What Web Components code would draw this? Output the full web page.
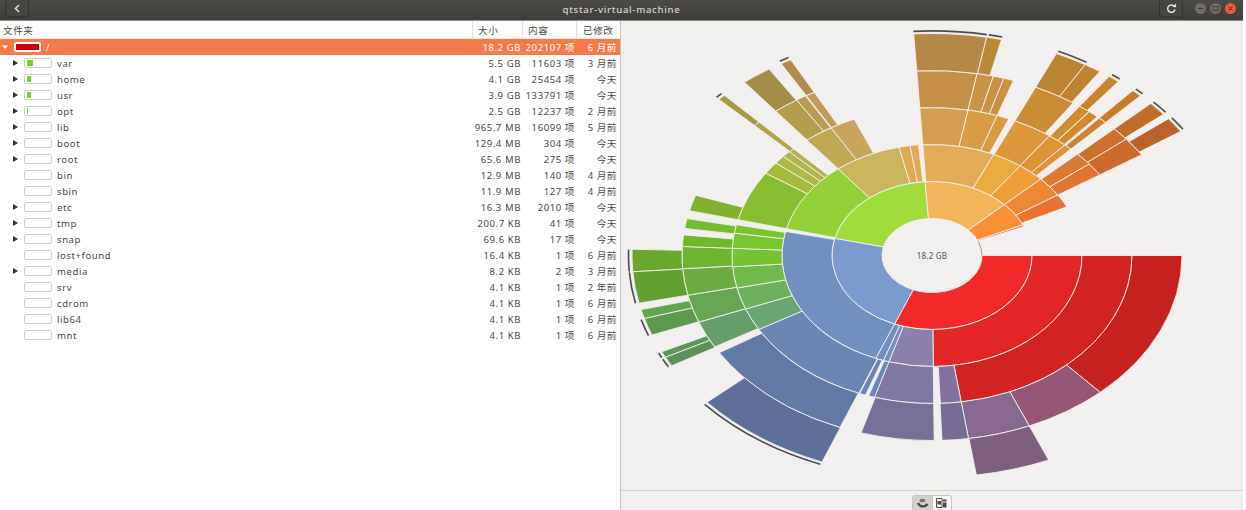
<!DOCTYPE html>
<html lang="zh-CN">
<head>
<meta charset="UTF-8">
<title>磁盘使用情况分析器</title>
<style>
  html, body { margin: 0; background: #fff; }
  body { font-family: "Noto Sans", "Noto Sans CJK SC", sans-serif; }
</style>
</head>
<body>
<app-window>
  <title-bar slot="top" heading="qtstar-virtual-machine"></title-bar>
  <folder-tree slot="left">
    <tree-row root open name="/" size="18.2 GB" count="202107 项" age="6 月前" fill="25"></tree-row>
    <tree-row arrow name="var" size="5.5 GB" count="11603 项" age="3 月前" fill="5.5"></tree-row>
    <tree-row arrow name="home" size="4.1 GB" count="25454 项" age="今天" fill="4"></tree-row>
    <tree-row arrow name="usr" size="3.9 GB" count="133791 项" age="今天" fill="3.5"></tree-row>
    <tree-row arrow name="opt" size="2.5 GB" count="12237 项" age="2 月前" fill="1.3"></tree-row>
    <tree-row arrow name="lib" size="965.7 MB" count="16099 项" age="5 月前"></tree-row>
    <tree-row arrow name="boot" size="129.4 MB" count="304 项" age="今天"></tree-row>
    <tree-row arrow name="root" size="65.6 MB" count="275 项" age="今天"></tree-row>
    <tree-row name="bin" size="12.9 MB" count="140 项" age="4 月前"></tree-row>
    <tree-row name="sbin" size="11.9 MB" count="127 项" age="4 月前"></tree-row>
    <tree-row arrow name="etc" size="16.3 MB" count="2010 项" age="今天"></tree-row>
    <tree-row arrow name="tmp" size="200.7 KB" count="41 项" age="今天"></tree-row>
    <tree-row arrow name="snap" size="69.6 KB" count="17 项" age="今天"></tree-row>
    <tree-row name="lost+found" size="16.4 KB" count="1 项" age="6 月前"></tree-row>
    <tree-row arrow name="media" size="8.2 KB" count="2 项" age="3 月前"></tree-row>
    <tree-row name="srv" size="4.1 KB" count="1 项" age="2 年前"></tree-row>
    <tree-row name="cdrom" size="4.1 KB" count="1 项" age="6 月前"></tree-row>
    <tree-row name="lib64" size="4.1 KB" count="1 项" age="6 月前"></tree-row>
    <tree-row name="mnt" size="4.1 KB" count="1 项" age="6 月前"></tree-row>
  </folder-tree>
  <chart-pane slot="right">
    <sun-burst total="18.2 GB"></sun-burst>
    <view-switch slot="foot"></view-switch>
  </chart-pane>
</app-window>

<script>
  // Outer frame: title bar on top, tree and chart side by side
  class AppWindow extends HTMLElement {
    constructor() {
      super();
      this.attachShadow({ mode: 'open' }).innerHTML = `
        <style>
          :host { display: flex; flex-direction: column; width: 1243px; height: 510px; background: #fff; }
          .body { display: flex; flex: 1; min-height: 0; }
          .left { display: block; width: 620px; background: #fff; border-right: 1px solid #c4c1bd; }
          .right { display: block; flex: 1; min-width: 0; }
        </style>
        <slot name="top"></slot>
        <div class="body">
          <div class="left"><slot name="left"></slot></div>
          <div class="right"><slot name="right"></slot></div>
        </div>`;
    }
  }

  class TitleBar extends HTMLElement {
    constructor() {
      super();
      this.attachShadow({ mode: 'open' }).innerHTML = `
        <style>
          :host {
            display: grid; grid-template-columns: 1fr auto 1fr; align-items: center;
            height: 21px; padding-bottom: 1px; box-sizing: border-box;
            background: linear-gradient(#4d4b45, #3e3d38); border-bottom: 1px solid #8b8985;
            color: #d8d5cd; font: 500 9.6px "Noto Sans", sans-serif; letter-spacing: .7px;
          }
          .side { display: flex; align-items: flex-start; height: 100%; }
          .end { justify-content: flex-end; }
          .btn {
            display: flex; align-items: center; justify-content: center;
            width: 24px; height: 17px; box-sizing: border-box; margin-left: 5px;
            border: 1px solid #35342f; border-top: 0; border-radius: 0 0 3px 3px; background: #47453f;
          }
          .ctl { display: flex; gap: 4px; margin: 3px 7px 0 12px; }
          .dot { width: 11px; height: 11px; border-radius: 50%; background: #6f6d66; display: flex; align-items: center; justify-content: center; }
          .dot.close { background: #e9602f; }
          svg { display: block; }
        </style>
        <div class="side">
          <div class="btn">
            <svg width="8" height="9" viewBox="0 0 8 9"><path d="M6 1L2.500 4.500L6 8" fill="none" stroke="#dcdad5" stroke-width="1.600"/></svg>
          </div>
        </div>
        <div class="title"></div>
        <div class="side end">
          <div class="btn">
            <svg width="11" height="11" viewBox="0 0 11 11">
              <path d="M8.200 3.200A3.700 3.700 0 1 0 9 6.500" fill="none" stroke="#e6e4df" stroke-width="1.500"/>
              <path d="M6.200 3.900L10.200 4.200L10 .6z" fill="#e6e4df"/>
            </svg>
          </div>
          <div class="ctl">
            <div class="dot"><svg width="7" height="7" viewBox="0 0 7 7"><path d="M1 3.500h5" stroke="#3f3e39" stroke-width="1"/></svg></div>
            <div class="dot"><svg width="7" height="7" viewBox="0 0 7 7"><rect x="1" y="1.500" width="5" height="4" fill="none" stroke="#3f3e39" stroke-width=".8"/></svg></div>
            <div class="dot close"><svg width="7" height="7" viewBox="0 0 7 7"><path d="M1.500 1.500l4 4M5.500 1.500l-4 4" stroke="#4a2516" stroke-width="1"/></svg></div>
          </div>
        </div>`;
      this.shadowRoot.querySelector('.title').textContent = this.getAttribute('heading');
    }
  }

  // Tree column headers plus the slotted rows
  class FolderTree extends HTMLElement {
    constructor() {
      super();
      this.attachShadow({ mode: 'open' }).innerHTML = `
        <style>
          :host { display: block; font: 9.6px "Noto Sans", "Noto Sans CJK SC", sans-serif; letter-spacing: .55px; color: #4a4a4a; }
          .head {
            display: grid; grid-template-columns: 473px 50px 54px 43px; height: 18px;
            background: linear-gradient(#fff, #fbfbfa); border-bottom: 1px solid #e9e7e4; box-sizing: border-box;
          }
          .head div { display: flex; align-items: center; padding-left: 5px; border-right: 1px solid #e3e1de; box-sizing: border-box; }
          .head div:first-child { padding-left: 3px; }
          .head div:last-child { border-right: 0; padding-left: 6px; }
        </style>
        <div class="head"><div>文件夹</div><div>大小</div><div>内容</div><div>已修改</div></div>
        <slot></slot>`;
    }
  }

  // One line of the tree: expander, usage bar, name and three data columns
  class TreeRow extends HTMLElement {
    constructor() {
      super();
      this.attachShadow({ mode: 'open' }).innerHTML = `
        <style>
          :host { display: grid; grid-template-columns: 473px 48px 54px 42px; height: 16px; align-items: center; color: #4a4a4a; padding-right: 3px; }
          :host([root]) { background: #f47b4b; color: #fff; }
          .name { display: flex; align-items: center; padding-left: 13px; }
          :host([root]) .name { padding-left: 2px; }
          .arrow { width: 5px; height: 6px; margin-right: 6px; }
          :host([root]) .arrow { width: 6px; margin-right: 6px; }
          .arrow svg { display: block; }
          .bar { width: 28px; height: 10px; box-sizing: border-box; border: 1px solid #d3d1ce; border-radius: 2px; background: #fff; padding: 1px 2px; margin-right: 5px; }
          :host([root]) .bar { width: 27px; height: 10px; border-color: #fff; padding: 1px; }
          .fill { height: 100%; background: #76d815; }
          :host([root]) .fill { background: #cc0000; width: 100% !important; }
          .val { text-align: right; white-space: nowrap; }
        </style>
        <div class="name">
          <div class="arrow"></div>
          <usage-bar class="bar"><div class="fill"></div></usage-bar>
          <span class="label"></span>
        </div>
        <div class="val size"></div><div class="val count"></div><div class="val age"></div>`;
    }

    connectedCallback() {
      const root = this.shadowRoot;
      root.querySelector('.label').textContent = this.getAttribute('name');
      root.querySelector('.size').textContent = this.getAttribute('size');
      root.querySelector('.count').textContent = this.getAttribute('count');
      root.querySelector('.age').textContent = this.getAttribute('age');
      root.querySelector('.fill').style.width = (this.getAttribute('fill') || 0) + 'px';
      if (this.hasAttribute('open')) {
        root.querySelector('.arrow').innerHTML = '<svg width="6" height="6" viewBox="0 0 6 6"><path d="M0 1.500h6L3 5z" fill="#fff"/></svg>';
      } else if (this.hasAttribute('arrow')) {
        root.querySelector('.arrow').innerHTML = '<svg width="5" height="6" viewBox="0 0 5 6"><path d="M0 0l5 3l-5 3z" fill="#2e2e2e"/></svg>';
      }
    }
  }

  class UsageBar extends HTMLElement {
    constructor() {
      super();
      this.attachShadow({ mode: 'open' }).innerHTML = `<style>:host { display: block; }</style><slot></slot>`;
    }
  }

  // Right side: chart area and the footer with the view switch
  class ChartPane extends HTMLElement {
    constructor() {
      super();
      this.attachShadow({ mode: 'open' }).innerHTML = `
        <style>
          :host { display: flex; flex-direction: column; height: 100%; background: #f1f0ef; }
          .canvas { flex: 1; min-height: 0; }
          .foot { height: 20px; box-sizing: border-box; border-top: 1px solid #d6d3cf; display: flex; justify-content: center; align-items: flex-end; }
        </style>
        <div class="canvas"><slot></slot></div>
        <div class="foot"><slot name="foot"></slot></div>`;
    }
  }

  // [ring, start angle, end angle, colour]. Angles run clockwise from 3 o'clock.
  const SEGMENTS = [
    // red
    [1, 0, 112, '#f22929'], [2, 0, 89.5, '#e32727'], [3, 0, 81.6, '#d12422'], [4, 0, 47.7, '#c4211f'],
    [4, 47.7, 67.1, '#965776'], [4, 67.1, 81.6, '#876890'], [5, 67.1, 81.5, '#7d5f80'],
    // purple
    [2, 89.5, 106.7, '#8a80ab'], [3, 89.5, 106.7, '#7f78a2'], [4, 89.5, 106.5, '#776f96'],
    [3, 81.6, 87.6, '#83719d'], [4, 81.6, 87.7, '#766c95'],
    // blue
    [1, 112, 193.5, '#7b9ace'], [2, 112, 192.5, '#7290bf'], [3, 111.4, 150, '#6b86b4'],
    [4, 111.6, 148.3, '#607aa5'], [5, 111.5, 138.6, '#5c7099'],
    [2, 106.7, 108.9, '#7290bf'], [2, 108.9, 112, '#7290bf'],
    [3, 106.7, 108.5, '#6b86b4'], [3, 109.4, 111.2, '#6b86b4'],
    // green
    [1, 193.5, 266, '#a0dc3c'], [2, 194, 231.3, '#94d138'], [3, 194, 213.8, '#89bd31'],
    [3, 213.8, 218.7, '#a6bb3d'], [3, 218.7, 222, '#aeb845'], [3, 222, 224.5, '#b2b44b'], [3, 224.5, 226.2, '#b5b04f'],
    [4, 224.7, 226.2, '#aea44a'], [5, 224.7, 226.2, '#a59a45'],
    [3, 150, 158.8, '#6aa673'], [3, 158.8, 167.3, '#6fb05f'], [3, 167.3, 175.6, '#72b84b'],
    [3, 175.6, 182.8, '#77c233'], [3, 182.8, 188.7, '#77c62a'], [3, 188.7, 192, '#7cc42c'],
    [4, 150.4, 158.9, '#659e6a'], [4, 158.9, 167.6, '#66a653'], [4, 167.6, 175.9, '#6bab41'],
    [4, 175.9, 182.8, '#6eb42f'], [4, 182.8, 186.4, '#6eb82a'], [4, 188.4, 191.5, '#77bb2f'], [4, 194, 199, '#81b12e'],
    [5, 175.8, 181.6, '#69a72d'], [5, 167.6, 175.8, '#62a032'], [5, 163.5, 165.9, '#66a350'],
    [5, 159, 163.5, '#5e9a4d'], [5, 152.7, 154.3, '#5d9659'], [5, 150.2, 152.7, '#5d915c'],
    // khaki
    [2, 231.3, 257.3, '#cbb55c'], [2, 257.3, 261.6, '#e0aa55'], [2, 261.6, 264.8, '#e3aa55'],
    [3, 231.3, 239.7, '#bfa955'], [3, 239.7, 247.1, '#c9a45f'],
    [4, 231.3, 237.2, '#b29e4e'], [4, 237.2, 239.6, '#bb9b52'], [4, 239.8, 241.9, '#c09c57'],
    [5, 231.3, 237.1, '#a38e48'], [5, 239.8, 241.9, '#b08c50'],
    // orange
    [1, 266, 316.5, '#f2b55a'], [1, 316.5, 335.5, '#fb8f39'], [1, 335.5, 337, '#f46c3a'],
    [2, 266.5, 294.3, '#e2ab55'], [2, 294.3, 306, '#e9aa3f'], [2, 306, 316.5, '#ed9e38'],
    [2, 316.5, 327, '#ec8733'], [2, 327, 334, '#ea7134'],
    [3, 266.5, 280.4, '#d39e50'], [3, 280.4, 289, '#d79c45'], [3, 289, 292.6, '#d89b42'],
    [3, 294.5, 306, '#db973a'], [3, 306, 311.6, '#de9434'], [3, 311.6, 314, '#df9134'],
    [3, 316.7, 321.8, '#dc7a33'], [3, 321.8, 327, '#df7433'],
    [4, 266.5, 280.4, '#c49048'], [4, 280.4, 284.2, '#c89345'], [4, 284.2, 286.7, '#c99242'], [4, 286.7, 289, '#cb9140'],
    [4, 294.5, 304.4, '#ca8c35'], [4, 306.2, 308.9, '#d18c2f'], [4, 309, 311.4, '#d0882f'], [4, 312, 314, '#cf8230'],
    [4, 316.8, 321, '#cc712d'], [4, 321, 327, '#cd6a2e'],
    [5, 266.5, 280.5, '#b58845'], [5, 280.5, 283.4, '#bb8838'], [5, 294.5, 300.7, '#bb8433'], [5, 300.7, 304, '#bf8233'],
    [5, 306.2, 308.4, '#c98230'], [5, 312, 314, '#c67a2d'], [5, 316.8, 320.5, '#c06c2a'], [5, 322, 326, '#b9622a']
  ];

  // Dark ticks outside the last ring, marking hidden deeper levels: [start, end]
  const TICKS = [
    [266.5, 280.4], [280.8, 283.4], [294.6, 300.6], [306.4, 308.2], [312.2, 313.9], [316.9, 320.3], [322.2, 325.8],
    [111.6, 138.5], [150.3, 152.5], [152.9, 154.2], [159.1, 163.4], [167.7, 175.7], [175.9, 181.5],
    [224.8, 226.1], [239.9, 241.8]
  ];

  const CX = 932, CY = 255.5, SQUASH = 0.74, BAND = 50;

  function point(r, deg) {
    const a = deg * Math.PI / 180;
    return (CX + r * Math.cos(a)).toFixed(2) + ' ' + (CY + r * SQUASH * Math.sin(a)).toFixed(2);
  }

  function arc(r, from, to, sweep) {
    const big = Math.abs(to - from) > 180 ? 1 : 0;
    return `A${r} ${r * SQUASH} 0 ${big} ${sweep} ${point(r, to)}`;
  }

  function wedge(ring, from, to) {
    const inner = ring * BAND, outer = inner + BAND;
    return `M${point(inner, from)}L${point(outer, from)}${arc(outer, from, to, 1)}L${point(inner, to)}${arc(inner, to, from, 0)}Z`;
  }

  class SunBurst extends HTMLElement {
    constructor() {
      super();
      const wedges = SEGMENTS.map(([ring, from, to, fill]) => `<path d="${wedge(ring, from, to)}" fill="${fill}"/>`).join('');
      const ticks = TICKS.map(([from, to]) => `<path d="M${point(303.5, from)}${arc(303.5, from, to, 1)}"/>`).join('');
      this.attachShadow({ mode: 'open' }).innerHTML = `
        <style>
          :host { display: block; height: 100%; }
          svg { display: block; width: 100%; height: 100%; }
          .wedges path { stroke: #f1efed; stroke-width: .9; stroke-linejoin: round; }
          .ticks path { fill: none; stroke: #4d4d4d; stroke-width: 1.6; }
          .ticks path.thin { stroke: #77756f; stroke-width: .7; }
          text { font: 8px "Noto Sans", sans-serif; fill: #555; letter-spacing: .2px; }
        </style>
        <svg viewBox="621 21 622 469">
          <g class="wedges">${wedges}</g>
          <g class="ticks">${ticks}<path class="thin" d="M${point(50, 338)}${arc(50, 338, 360, 1)}"/></g>
          <text x="${CX}" y="258.5" text-anchor="middle">${this.getAttribute('total')}</text>
        </svg>`;
    }
  }

  // Ring chart / treemap toggle in the footer
  class ViewSwitch extends HTMLElement {
    constructor() {
      super();
      this.attachShadow({ mode: 'open' }).innerHTML = `
        <style>
          :host { display: flex; width: 40px; height: 15px; box-sizing: border-box; border: 1px solid #c9c6c2; border-bottom: 0; border-radius: 3px 3px 0 0; overflow: hidden; }
          div { flex: 1; display: flex; align-items: center; justify-content: center; background: #f7f6f5; }
          div.on { background: #d3d0cc; border-right: 1px solid #c9c6c2; }
          svg { display: block; }
        </style>
        <div class="on">
          <svg width="13" height="10" viewBox="0 0 13 10">
            <path d="M1 5c.5 2.500 3 4.500 6 4.500s5-1.500 5.500-3.500l-2.500-.5c-.5 1-1.500 1.800-3 1.800s-3-1-3.500-2.300z" fill="#4a4a48"/>
            <path d="M3.500 4a3 3 0 0 1 6 -.5l-3 .8z" fill="#737370"/>
          </svg>
        </div>
        <div>
          <svg width="11" height="10" viewBox="0 0 11 10">
            <path d="M.5 .5h5.500v9h-5.500z" fill="none" stroke="#4a4a48"/>
            <path d="M1.500 3h3.500v3.500h-3.500z" fill="#4a4a48"/>
            <path d="M7 1.500h3.500v2h-3.500zM7 4.500h3.500v5h-3.500z" fill="#4a4a48"/>
          </svg>
        </div>`;
    }
  }

  customElements.define('app-window', AppWindow);
  customElements.define('title-bar', TitleBar);
  customElements.define('folder-tree', FolderTree);
  customElements.define('usage-bar', UsageBar);
  customElements.define('tree-row', TreeRow);
  customElements.define('chart-pane', ChartPane);
  customElements.define('sun-burst', SunBurst);
  customElements.define('view-switch', ViewSwitch);
</script>
</body>
</html>
